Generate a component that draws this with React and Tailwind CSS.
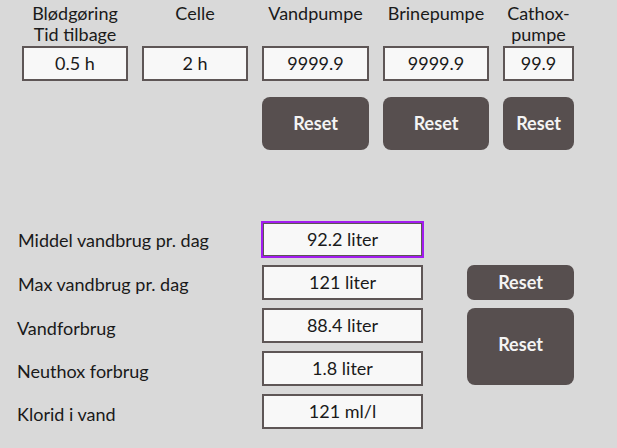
export default function App() {
  const cols = [
    { label: ["Blødgøring", "Tid tilbage"], value: "0.5 h", w: "w-[106px]", reset: false },
    { label: ["Celle"], value: "2 h", w: "w-[106px]", reset: false },
    { label: ["Vandpumpe"], value: "9999.9", w: "w-[107px]", reset: true },
    { label: ["Brinepumpe"], value: "9999.9", w: "w-[106px]", reset: true },
    { label: ["Cathox-", "pumpe"], value: "99.9", w: "w-[71px]", reset: true },
  ];
  const rows = [
    ["Middel vandbrug pr. dag", "92.2 liter"],
    ["Max vandbrug pr. dag", "121 liter"],
    ["Vandforbrug", "88.4 liter"],
    ["Neuthox forbrug", "1.8 liter"],
    ["Klorid i vand", "121 ml/l"],
  ];
  return (
    <div
      className="w-[617px] h-[448px] bg-[#d9d9d9] text-[#1a1a1a] overflow-hidden"
      style={{ fontFamily: "Lato, 'Open Sans', sans-serif" }}
    >
      <div className="flex gap-[14px] pl-[22px] pt-[3px]">
        {cols.map((c, i) => (
          <div key={i} className={`flex flex-col items-center ${c.w}`}>
            <div className="h-[43px] text-[18px] leading-[21px] text-center whitespace-nowrap">
              {c.label.map((l, j) => (
                <div key={j}>{l}</div>
              ))}
            </div>
            <div className="w-full h-[35px] border-2 border-[#5e5656] bg-[#f8f8f8] flex items-center justify-center text-[18px]">
              {c.value}
            </div>
            {c.reset ? (
              <button className="mt-[16px] w-full h-[53px] rounded-[8px] bg-[#574f4f] text-[#f4f4f4] font-bold text-[18px]">
                Reset
              </button>
            ) : (
              <div className="mt-[16px] h-[53px]" />
            )}
          </div>
        ))}
      </div>

      <div className="mt-[72px] grid grid-cols-[244px_161px_107px] grid-rows-[repeat(5,35px)] gap-y-[8px] pl-[18px]">
        {rows.map(([label, value], i) => (
          <div key={i} className="contents">
            <div
              className={`flex items-center text-[18px] ${i === 0 ? "pt-[2px]" : "pt-[4px]"} ${i >= 2 ? "-ml-[1px] pt-[6px]" : ""}`}
              style={{ gridRow: i + 1, gridColumn: 1 }}
            >
              {label}
            </div>
            <div
              className={`h-[35px] border-2 border-[#5e5656] bg-[#f8f8f8] flex items-center justify-center text-[18px] ${i === 0 ? "outline-2 outline-[#a21cf0] outline-offset-[-1px]" : ""}`}
              style={{ gridRow: i + 1, gridColumn: 2 }}
            >
              {value}
            </div>
          </div>
        ))}
        <button
          className="ml-[44px] w-[107px] h-[35px] rounded-[7px] bg-[#574f4f] text-[#f4f4f4] font-bold text-[18px]"
          style={{ gridRow: 2, gridColumn: 3 }}
        >
          Reset
        </button>
        <button
          className="ml-[44px] w-[107px] h-[77px] rounded-[8px] bg-[#574f4f] text-[#f4f4f4] font-bold text-[18px] flex items-start justify-center pt-[23px]"
          style={{ gridRow: "3 / span 2", gridColumn: 3 }}
        >
          Reset
        </button>
      </div>
    </div>
  );
}
